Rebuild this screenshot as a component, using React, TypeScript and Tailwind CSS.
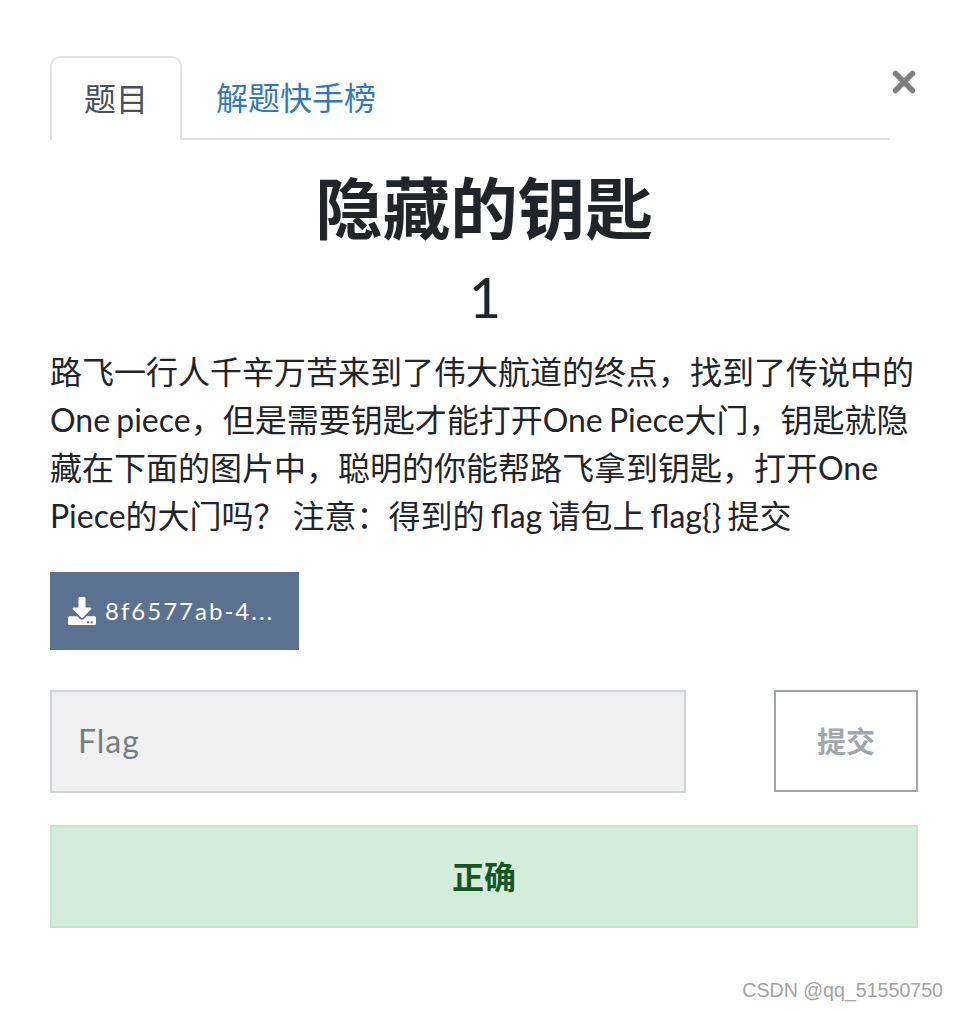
import { FaDownload } from "react-icons/fa";

const fontStack = "font-['Lato','Noto_Sans_CJK_SC',sans-serif]";

export default function App() {
  return (
    <div className={`${fontStack} w-[958px] h-[1010px] bg-white pt-[56px] pl-[50px] pr-[40px] text-[#212529] overflow-hidden`}>
      <div className="relative">
        <div className="flex w-[840px] h-[84px] border-b-2 border-[#dee2e6]">
          <div className="w-[132px] h-[84px] flex items-center justify-center bg-white border-2 border-b-0 border-[#dee2e6] rounded-t-[10px] text-[32px] text-[#495057]">
            题目
          </div>
          <div className="px-[34px] h-[82px] flex items-center pt-[2px] text-[32px] text-[#337ab7]">
            解题快手榜
          </div>
        </div>
        <button className="absolute top-[6px] right-0 w-[28px] h-[40px] flex items-center justify-center text-[#808080]">
          <svg width="24" height="24" viewBox="0 0 24 24">
            <path d="M3.5 3.5 L20.5 20.5 M20.5 3.5 L3.5 20.5" stroke="currentColor" strokeWidth="5.5" strokeLinecap="round" />
          </svg>
        </button>
      </div>

      <h1 className="mt-[28px] text-center text-[67.5px] leading-[80px] font-bold">隐藏的钥匙</h1>
      <h2 className="mt-[17px] pl-[2px] text-center text-[56px] leading-[64px] font-normal">1</h2>

      <p className="mt-[19px] text-[32px] leading-[48px] w-[868px] [word-spacing:-2px]">
        路飞一行人千辛万苦来到了伟大航道的终点，找到了传说中的One piece，但是需要钥匙才能打开One Piece大门，钥匙就隐藏在下面的图片中，聪明的你能帮路飞拿到钥匙，打开One Piece的大门吗？<span className="ml-[7px]">注意：得到的 flag 请包上 flag{"{}"} 提交</span>
      </p>

      <div className="mt-[32px] flex items-center w-[249px] h-[78px] bg-[#5b7190] text-white px-[18px] gap-[9px]">
        <FaDownload className="text-[28px] shrink-0" />
        <span className="text-[24px] tracking-[2px] whitespace-nowrap">8f6577ab-4...</span>
      </div>

      <div className="mt-[40px] flex w-[868px] justify-between">
        <div className="w-[636px] h-[103px] bg-[#f0f0f0] border-2 border-[#ced4da] flex items-center pb-[2px] px-[26px] text-[32px] tracking-[1px] text-[#757d84]">
          Flag
        </div>
        <button className="w-[144px] h-[102px] border-2 border-[#a1a6ad] bg-white pt-[2px] text-[29px] font-bold text-[#a1a6ad]">
          提交
        </button>
      </div>

      <div className="mt-[32px] w-[868px] h-[103px] bg-[#d4edda] border-2 border-[#c3e6cb] flex items-center justify-center text-[32px] font-bold text-[#155724]">
        正确
      </div>

      <div className="mt-[49px] w-[893px] text-right font-['Liberation_Sans',sans-serif] text-[19.6px] leading-[26px] text-[#a3a3a3]">
        CSDN @qq_51550750
      </div>
    </div>
  );
}
